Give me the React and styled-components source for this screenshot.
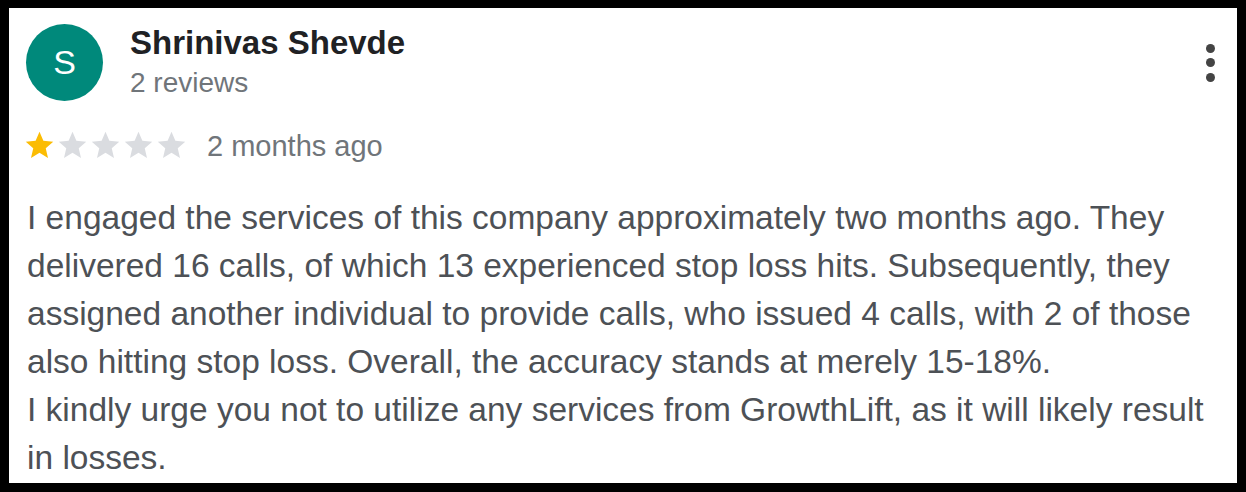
import React from "react";
import styled, { createGlobalStyle } from "styled-components";

const Global = createGlobalStyle`
  html, body { margin: 0; padding: 0; background: #000; }
  body { font-family: "Liberation Sans", Arial, sans-serif; }
`;

const Frame = styled.div`
  width: 1246px;
  height: 492px;
  box-sizing: border-box;
  padding: 8px 9px 9px 9px;
  background: #000;
`;

const Card = styled.div`
  background: #fff;
  height: 100%;
  box-sizing: border-box;
  padding: 16px 25px 0 17px;
  display: flex;
  flex-direction: column;
`;

const Header = styled.div`
  display: flex;
  align-items: center;
`;

const Avatar = styled.div`
  width: 77px;
  height: 77px;
  border-radius: 50%;
  background: ${(p) => p.$color};
  color: #fff;
  display: flex;
  align-items: center;
  justify-content: center;
  font-size: 34px;
  flex-shrink: 0;
`;

const Who = styled.div`
  margin-left: 27px;
  display: flex;
  flex-direction: column;
  gap: 4px;
  flex: 1;
`;

const Name = styled.div`
  font-size: 33px;
  line-height: 36px;
  font-weight: 700;
  color: #202124;
`;

const Sub = styled.div`
  font-size: 28px;
  line-height: 36px;
  color: #70757a;
`;

const MenuButton = styled.button`
  border: 0;
  background: none;
  padding: 0;
  margin-right: -3px;
  display: flex;
  flex-direction: column;
  align-items: center;
  gap: 5.5px;
`;

const Dot = styled.span`
  width: 9px;
  height: 9px;
  border-radius: 50%;
  background: #444;
  display: block;
`;

const RatingRow = styled.div`
  margin-top: 27px;
  display: flex;
  align-items: center;
  margin-left: -3px;
`;

const Stars = styled.div`
  display: flex;
  margin-top: -2px;
`;

const StarSvg = styled.svg`
  width: 33px;
  height: 33px;
  display: block;
  fill: ${(p) => (p.$on ? "#fbbc04" : "#dadce0")};
`;

const When = styled.span`
  margin-left: 19px;
  font-size: 29px;
  line-height: 36px;
  color: #70757a;
`;

const Body = styled.div`
  margin-top: 30px;
  margin-left: 1px;
  font-size: 33.5px;
  line-height: 48px;
  color: #4d5156;
`;

const Star = ({ on }) => (
  <StarSvg $on={on} viewBox="0 0 24 24">
    <path d="M12 17.27L18.18 21l-1.64-7.03L22 9.24l-7.19-.61L12 2 9.19 8.63 2 9.24l5.46 4.73L5.82 21z" />
  </StarSvg>
);

export default function App() {
  const rating = 1;
  return (
    <>
      <Global />
      <Frame>
        <Card>
          <Header>
            <Avatar $color="#00897b">S</Avatar>
            <Who>
              <Name>Shrinivas Shevde</Name>
              <Sub>2 reviews</Sub>
            </Who>
            <MenuButton aria-label="More">
              <Dot />
              <Dot />
              <Dot />
            </MenuButton>
          </Header>
          <RatingRow>
            <Stars>
              {[1, 2, 3, 4, 5].map((i) => (
                <Star key={i} on={i <= rating} />
              ))}
            </Stars>
            <When>2 months ago</When>
          </RatingRow>
          <Body>
            I engaged the services of this company approximately two months ago. They delivered 16 calls, of which 13 experienced stop loss hits. Subsequently, they assigned another individual to provide calls, who issued 4 calls, with 2 of those also hitting stop loss. Overall, the accuracy stands at merely 15-18%.
            <br />
            I kindly urge you not to utilize any services from GrowthLift, as it will likely result in losses.
          </Body>
        </Card>
      </Frame>
    </>
  );
}
